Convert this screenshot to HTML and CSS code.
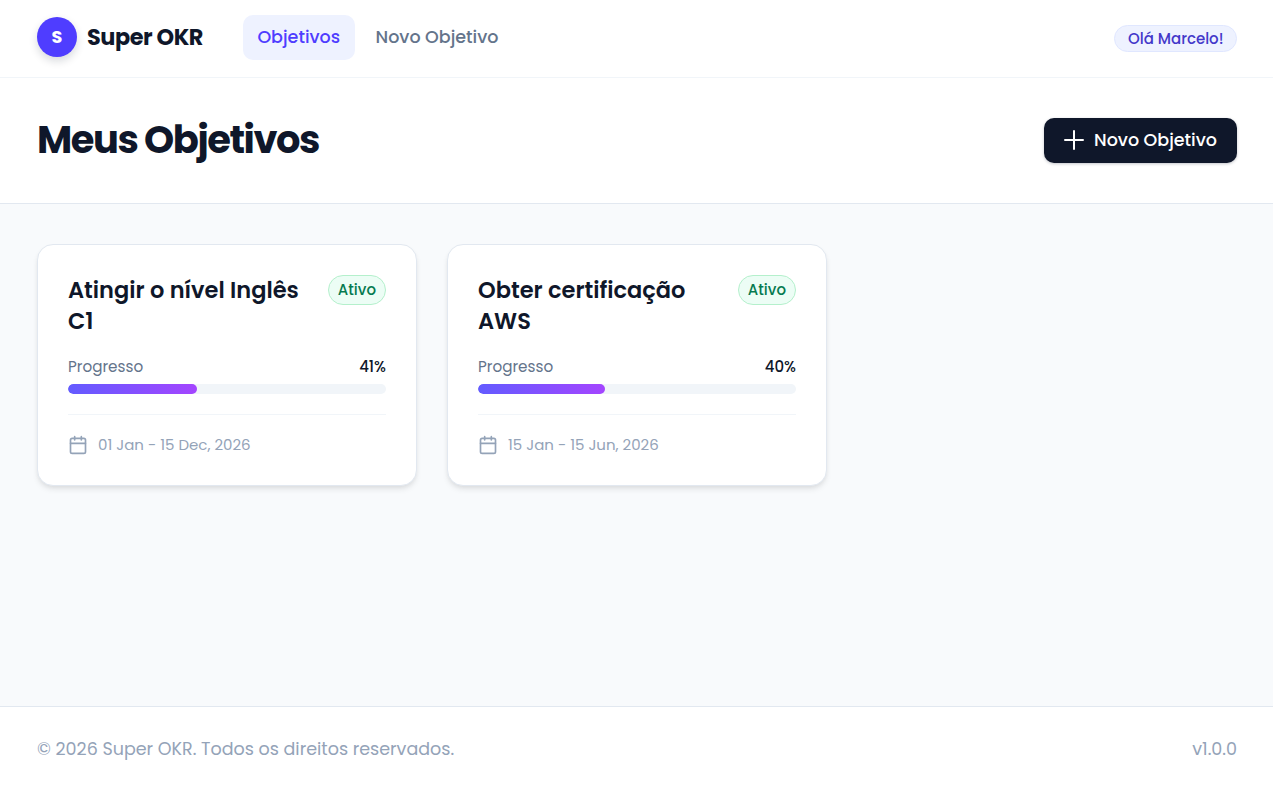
FILE: index.html
```html
<!DOCTYPE html>
<html lang="pt">
<head>
<meta charset="utf-8">
<title>Super OKR</title>
<link rel="stylesheet" href="styles.css">
</head>
<body>
<header class="topbar">
  <div class="brand"><span class="brand-mark">S</span><span class="brand-name">Super OKR</span></div>
  <nav class="nav">
    <a class="nav-item active">Objetivos</a>
    <a class="nav-item">Novo Objetivo</a>
  </nav>
  <span class="greeting">Olá Marcelo!</span>
</header>
<section class="page-head">
  <h1>Meus Objetivos</h1>
  <button class="primary">
    <svg class="plus" viewBox="0 0 22 22" fill="none" stroke="currentColor" stroke-width="2" stroke-linecap="round"><path d="M11 2v18M2 11h18"/></svg>
    Novo Objetivo
  </button>
</section>
<main class="content">
  <article class="card">
    <div class="card-top"><h2>Atingir o nível Inglês C1</h2><span class="status">Ativo</span></div>
    <div class="progress-row"><span>Progresso</span><b>41%</b></div>
    <div class="track"><div class="fill" style="width:40.6%"></div></div>
    <div class="dates">
      <svg class="cal" viewBox="0 0 24 24" fill="none" stroke="currentColor" stroke-width="2" stroke-linecap="round" stroke-linejoin="round"><rect x="3" y="4" width="18" height="18" rx="2"/><path d="M16 2v4M8 2v4M3 10h18"/></svg>
      <span>01 Jan - 15 Dec, 2026</span>
    </div>
  </article>
  <article class="card">
    <div class="card-top"><h2>Obter certificação AWS</h2><span class="status">Ativo</span></div>
    <div class="progress-row"><span>Progresso</span><b>40%</b></div>
    <div class="track"><div class="fill" style="width:40%"></div></div>
    <div class="dates">
      <svg class="cal" viewBox="0 0 24 24" fill="none" stroke="currentColor" stroke-width="2" stroke-linecap="round" stroke-linejoin="round"><rect x="3" y="4" width="18" height="18" rx="2"/><path d="M16 2v4M8 2v4M3 10h18"/></svg>
      <span>15 Jan - 15 Jun, 2026</span>
    </div>
  </article>
</main>
<footer class="footer"><span>© 2026 Super OKR. Todos os direitos reservados.</span><span>v1.0.0</span></footer>
</body>
</html>
```

FILE: styles.css
```css
* { box-sizing: border-box; }
html, body { height: 100%; }
body {
  margin: 0;
  min-height: 787px;
  display: flex;
  flex-direction: column;
  background: #fff;
  color: #0f172a;
  font-family: "Poppins", "Inter", "Liberation Sans", sans-serif;
}
.topbar {
  height: 78px;
  flex: none;
  display: flex;
  align-items: center;
  padding: 0 36px 3px 37px;
  border-bottom: 1px solid #f1f5f9;
}
.brand { display: flex; align-items: center; gap: 10px; width: 206px; }
.brand-mark {
  width: 40px; height: 40px; border-radius: 50%;
  display: flex; align-items: center; justify-content: center;
  background: #4f3dff; color: #fff; font-weight: 700; font-size: 17.6px;
  box-shadow: 0 4px 8px rgba(15,23,42,.16);
}
.brand-name { font-size: 22.4px; font-weight: 700; letter-spacing: -.45px; }
.nav { display: flex; gap: 6px; flex: 1; }
.nav-item {
  padding: 0 14.4px; height: 45px; display: flex; align-items: center;
  border-radius: 10px; font-size: 17.5px; font-weight: 500; color: #64748b;
}
.nav-item.active { background: #eef2ff; color: #4f3dff; padding-right: 15px; }
.greeting {
  margin-top: 3px; height: 27px; padding: 0 12.5px; display: flex; align-items: center;
  border-radius: 14px; background: #eef2ff; border: 1px solid #e0e7ff;
  color: #4338ca; font-size: 15px; font-weight: 500;
}
.page-head {
  height: 126px; flex: none;
  display: flex; align-items: center; justify-content: space-between;
  padding: 0 36px 0 37px;
  border-bottom: 1px solid #e2e8f0;
}
h1 { margin: 0; padding-bottom: 2px; font-size: 38.4px; font-weight: 700; letter-spacing: -1.45px; }
.primary {
  height: 45px; padding: 0 20px 1px 19.5px; display: flex; align-items: center; gap: 8.8px;
  border: 0; border-radius: 10px; background: #0f172a; color: #fff;
  font: 500 17.5px "Poppins", "Inter", "Liberation Sans", sans-serif;
  box-shadow: 0 1px 3px rgba(15,23,42,.25);
}
.plus { width: 22px; height: 22px; }
.content {
  flex: 1; background: #f8fafc; padding: 40px 37px;
  display: flex; gap: 30px; align-items: flex-start;
}
.card {
  width: 380px; height: 242px; padding: 30px;
  background: #fff; border: 1px solid #e2e8f0; border-radius: 16px;
  box-shadow: 0 4px 6px -1px rgba(0,0,0,.09), 0 2px 4px -1px rgba(0,0,0,.05);
}
.card-top { display: flex; justify-content: space-between; align-items: flex-start; gap: 24px; height: 62px; }
h2 { margin: 0; font-size: 22.5px; line-height: 31px; font-weight: 600; }
.status {
  flex: none; height: 30px; padding: 0 9px 1px; display: flex; align-items: center;
  border-radius: 15px; background: #ecfdf5; border: 1px solid #b4f0cc;
  color: #067a50; font-size: 15px; font-weight: 500;
}
.progress-row {
  margin-top: 18px; height: 23px; display: flex; justify-content: space-between; align-items: center;
  font-size: 15.2px; color: #64748b;
}
.progress-row b { color: #0f172a; font-weight: 500; font-size: 15px; }
.track { margin-top: 6px; height: 10px; border-radius: 5px; background: #f1f5f9; overflow: hidden; }
.fill { height: 100%; border-radius: 5px; background: linear-gradient(90deg, #635bff, #a445ff); }
.dates {
  margin-top: 20px; padding-top: 18px; border-top: 1px solid #f1f5f9;
  display: flex; align-items: center; gap: 10px; color: #94a3b8; font-size: 15px;
}
.cal { width: 20px; height: 20px; flex: none; }
.footer {
  height: 81px; flex: none; display: flex; align-items: center; justify-content: space-between;
  padding: 3px 36px 0 37px; border-top: 1px solid #e2e8f0;
  color: #94a3b8; font-size: 17.5px;
}
```
